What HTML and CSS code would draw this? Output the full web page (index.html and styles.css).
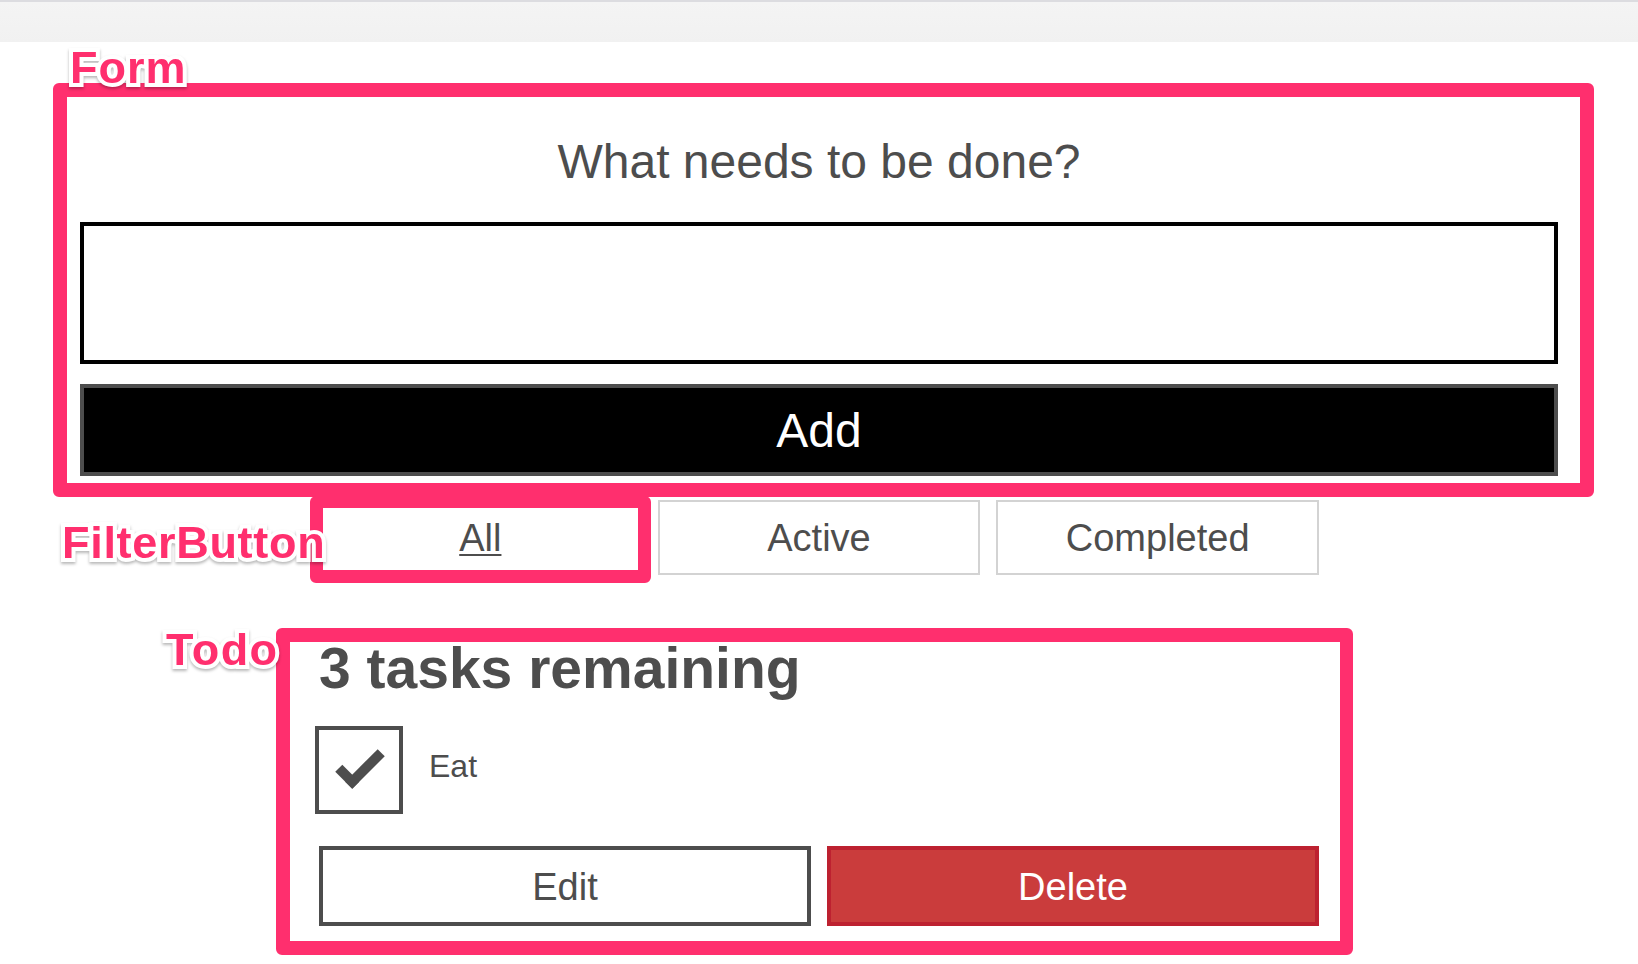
FILE: index.html
```html
<!DOCTYPE html>
<html lang="en">
<head>
<meta charset="utf-8">
<title>Todo</title>
<link rel="stylesheet" href="styles.css">
</head>
<body>
<div class="topbar"></div>
<div class="todoapp">
  <form class="add-form">
    <h2 class="label-wrapper"><label class="label__lg" for="new-todo-input">What needs to be done?</label></h2>
    <input type="text" id="new-todo-input" class="input__lg" autocomplete="off">
    <button type="button" class="btn btn__primary btn__lg">Add</button>
  </form>
  <div class="filters">
    <button type="button" class="btn toggle-btn pressed"><span>All</span></button>
    <button type="button" class="btn toggle-btn"><span>Active</span></button>
    <button type="button" class="btn toggle-btn"><span>Completed</span></button>
  </div>
  <h2 class="list-heading">3 tasks remaining</h2>
  <ul class="todo-list">
    <li class="todo">
      <div class="c-cb">
        <input id="todo-0" type="checkbox" checked>
        <label class="todo-label" for="todo-0">Eat</label>
      </div>
      <div class="btn-group">
        <button type="button" class="btn btn__edit">Edit</button>
        <button type="button" class="btn btn__danger">Delete</button>
      </div>
    </li>
  </ul>
</div>

<div class="annot-box box-form"></div>
<div class="annot-box box-filter"></div>
<div class="annot-box box-todo"></div>
<div class="annot-label label-form">Form</div>
<div class="annot-label label-filter">FilterButton</div>
<div class="annot-label label-todo">Todo</div>
</body>
</html>
```

FILE: styles.css
```css
*, *::before, *::after { box-sizing: border-box; }

html, body {
  margin: 0;
  padding: 0;
}

body {
  position: relative;
  width: 1638px;
  height: 964px;
  overflow: hidden;
  background: #fff;
  color: #4d4d4d;
  font-family: "Liberation Sans", Arial, sans-serif;
}

.topbar {
  height: 42px;
  background: linear-gradient(#f4f4f4, #f1f1f1);
  border-top: 2px solid #dcdce0;
}

.todoapp {
  padding: 80px 80px 0 80px;
}

.add-form {
  display: flex;
  flex-direction: column;
}

.label-wrapper {
  margin: 0 0 20px 0;
  padding: 16px 0;
  text-align: center;
  font-weight: 400;
  font-size: 48px;
  line-height: 48px;
  height: 80px;
}

.label__lg { color: #4d4d4d; }

.input__lg {
  display: block;
  width: 100%;
  height: 142px;
  margin: 0 0 20px 0;
  padding: 40px;
  border: 4px solid #000;
  border-radius: 0;
  font: inherit;
  font-size: 48px;
  background: #fff;
  outline: none;
}

.btn {
  margin: 0;
  padding: 16px 20px 14px;
  border: 4px solid #4d4d4d;
  background: transparent;
  color: inherit;
  font-family: "Liberation Sans", Arial, sans-serif;
  font-size: 38px;
  cursor: pointer;
  -webkit-appearance: none;
  appearance: none;
}

.btn__primary {
  height: 92px;
  width: 100%;
  background: #000;
  color: #fff;
  font-size: 48px;
  line-height: 54px;
}

.filters {
  width: 1000px;
  margin: 24px auto 0;
  display: flex;
  gap: 16px;
}

.toggle-btn {
  flex: 1 1 0;
  height: 75px;
  border-width: 2px;
  border-color: #d3d3d3;
  line-height: 41px;
  color: #4d4d4d;
  background: #fff;
}

.toggle-btn.pressed {
  border-color: #4d4d4d;
  text-decoration: underline;
  text-decoration-thickness: 2px;
  text-underline-offset: 3px;
}

.list-heading {
  width: 1000px;
  margin: 56px auto 0;
  font-size: 57px;
  font-weight: 700;
  line-height: 75px;
  height: 75px;
}

.todo-list {
  width: 1000px;
  margin: 24px auto 0;
  padding: 0;
  list-style: none;
}

.todo {
  display: flex;
  flex-direction: column;
}

.c-cb {
  position: relative;
  min-height: 88px;
  padding-left: 80px;
  font-size: 32px;
  line-height: 40px;
}

.c-cb > input[type="checkbox"] {
  position: absolute;
  top: -4px;
  left: -4px;
  width: 88px;
  height: 88px;
  margin: 0;
  opacity: 0;
  z-index: 1;
}

.todo-label {
  display: inline-block;
  padding: 16px 30px 10px;
}

.todo-label::before {
  content: "";
  position: absolute;
  top: -4px;
  left: -4px;
  width: 88px;
  height: 88px;
  border: 4px solid currentColor;
}

.todo-label::after {
  content: "";
  box-sizing: content-box;
  position: absolute;
  top: 22px;
  left: 18px;
  width: 36px;
  height: 14px;
  transform: rotate(-45deg);
  border: solid currentColor;
  border-width: 0 0 10px 10px;
  border-top-color: transparent;
}

.btn-group {
  margin-top: 28px;
  display: flex;
  gap: 16px;
}

.btn-group > .btn {
  flex: 1 1 0;
  height: 80px;
  line-height: 42px;
}

.btn__edit {
  background: #fff;
  color: #4d4d4d;
}

.btn__danger {
  background: #ca3c3c;
  border-color: #bd2130;
  color: #fff;
}

/* Annotation overlays */
.annot-box {
  position: absolute;
  border: 14px solid #ff2f6e;
  border-radius: 6px;
  pointer-events: none;
}

.box-form {
  left: 53px;
  top: 83px;
  width: 1541px;
  height: 414px;
}

.box-filter {
  left: 310px;
  top: 496px;
  width: 341px;
  height: 87px;
  border-width: 12px 13px 13px 13px;
}

.box-todo {
  left: 276px;
  top: 628px;
  width: 1077px;
  height: 327px;
  border-width: 14px 13px 14px 14px;
}

.annot-label {
  position: absolute;
  font-family: "Liberation Sans", Arial, sans-serif;
  font-weight: 700;
  font-size: 45px;
  line-height: 45px;
  letter-spacing: 1px;
  color: #ff2f6e;
  -webkit-text-stroke: 8px #fff;
  paint-order: stroke fill;
  filter: drop-shadow(0 2px 1.5px rgba(0, 0, 0, 0.28));
  white-space: nowrap;
}

.label-form { left: 70px; top: 45px; }
.label-filter { left: 62px; top: 520px; letter-spacing: 0.7px; }
.label-todo { left: 166px; top: 627px; letter-spacing: 1.5px; }
```
